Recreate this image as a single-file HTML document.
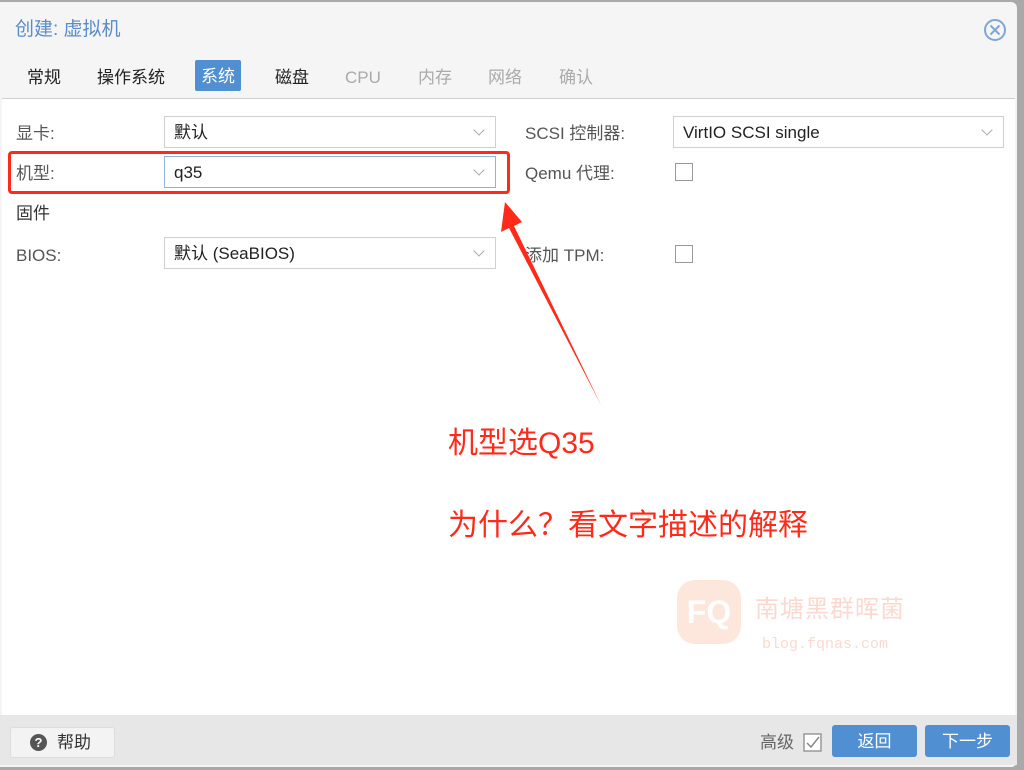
<!DOCTYPE html>
<html><head><meta charset="utf-8"><style>
*{box-sizing:border-box;margin:0;padding:0}
body{width:1024px;height:770px;background:#a9a9a9;position:relative;overflow:hidden;font-family:"Liberation Sans","Noto Sans CJK SC",sans-serif;line-height:1}
.dlg{position:absolute;left:0;top:2px;width:1017px;height:765px;background:#f5f5f5;border-radius:0 6px 6px 0;overflow:hidden}
.a{position:absolute;white-space:nowrap;line-height:1}
.title{left:15px;top:18px;font-size:19px;color:#5a8dc8}
.tab{top:67px;font-size:17px;color:#222}
.tab.dis{color:#aaa}
.body{position:absolute;left:2px;top:98px;width:1013px;height:617px;background:#fff;border-top:1px solid #cfcfcf}
.lbl{font-size:17px;color:#555}
.sel{position:absolute;height:32px;border:1px solid #cfcfcf;background:#fff;font-size:17px;line-height:17px;color:#222;padding:7px 0 0 9px;white-space:nowrap}
.sel:after{content:"";position:absolute;right:12px;top:9px;width:7px;height:7px;border-right:1.3px solid #aaa;border-bottom:1.3px solid #aaa;transform:rotate(45deg)}
.cb{position:absolute;width:18px;height:18px;border:1.5px solid #999;background:#fff}
.foot{position:absolute;left:0;top:715px;width:1017px;height:50px;background:#e7e7e7}
.btn{position:absolute;top:725px;height:32px;border-radius:3px;background:#4f8fd2;color:#fff;font-size:17px;line-height:17px;text-align:center;padding-top:8px}
.red{color:#ff2a1a;font-size:30px}
</style></head><body>
<div class="dlg">
<div class="a title">创建: 虚拟机</div>
<svg class="a" style="left:983px;top:16px" width="24" height="24"><circle cx="12" cy="12" r="10" fill="none" stroke="#7fa6d8" stroke-width="2"/><path d="M7.5 7.5L16.5 16.5M16.5 7.5L7.5 16.5" stroke="#7fa6d8" stroke-width="2"/></svg>
<div class="a tab" style="left:27px">常规</div>
<div class="a tab" style="left:97px">操作系统</div>
<div class="a" style="left:195px;top:58px;width:46px;height:31px;background:#4f8fd2;border-radius:2px;color:#fff;font-size:17px;text-align:center;padding-top:8px">系统</div>
<div class="a tab" style="left:275px">磁盘</div>
<div class="a tab dis" style="left:345px">CPU</div>
<div class="a tab dis" style="left:418px">内存</div>
<div class="a tab dis" style="left:488px">网络</div>
<div class="a tab dis" style="left:559px">确认</div>
</div>
<div class="body"></div>
<div class="a lbl" style="left:16px;top:125px">显卡:</div>
<div class="sel" style="left:164px;top:116px;width:332px">默认</div>
<div class="a lbl" style="left:16px;top:165px">机型:</div>
<div class="sel" style="left:164px;top:156px;width:332px;border-color:#8fb3de">q35</div>
<div class="a" style="left:8px;top:151px;width:502px;height:43px;border:3px solid #ff2a1a;border-radius:4px"></div>
<div class="a lbl" style="left:16px;top:205px;color:#333">固件</div>
<div class="a lbl" style="left:16px;top:247px">BIOS:</div>
<div class="sel" style="left:164px;top:237px;width:332px">默认 (SeaBIOS)</div>
<div class="a lbl" style="left:525px;top:125px">SCSI 控制器:</div>
<div class="sel" style="left:673px;top:116px;width:331px">VirtIO SCSI single</div>
<div class="a lbl" style="left:525px;top:165px">Qemu 代理:</div>
<div class="cb" style="left:675px;top:163px"></div>
<div class="a lbl" style="left:525px;top:247px">添加 TPM:</div>
<div class="cb" style="left:675px;top:245px"></div>
<svg class="a" style="left:0;top:0" width="1024" height="770"><polygon points="505,202 522,222 514,226 601,405 509,228 501,232" fill="#ff2a1a"/></svg>
<div class="a red" style="left:448px;top:429px">机型选Q35</div>
<div class="a red" style="left:448px;top:511px">为什么？看文字描述的解释</div>
<div class="a" style="left:677px;top:580px;width:64px;height:64px;border-radius:18px;background:#fde6dc;color:#fff;font-size:32px;font-weight:bold;text-align:center;padding-top:16px">FQ</div>
<div class="a" style="left:755px;top:598px;font-size:24px;color:#fcd9d0;letter-spacing:1px">南塘黑群晖菌</div>
<div class="a" style="left:762px;top:637px;font-family:'Liberation Mono',monospace;font-size:15px;color:#fcd9d0">blog.fqnas.com</div>
<div class="foot"></div>
<div class="a" style="left:10px;top:727px;width:105px;height:31px;background:#f3f3f3;border:1px solid #ddd;border-radius:3px"></div>
<div class="a" style="left:30px;top:734px;width:17px;height:17px;border-radius:50%;background:#555;color:#fff;font-size:13px;font-weight:bold;text-align:center;line-height:17px">?</div>
<div class="a" style="left:57px;top:734px;font-size:17px;color:#333">帮助</div>
<div class="a" style="left:760px;top:734px;font-size:17px;color:#666">高级</div>
<svg class="a" style="left:803px;top:733px" width="19" height="19"><rect x="1" y="1" width="17" height="17" fill="#fff" stroke="#999" stroke-width="1.5"/><path d="M4 10L8 14L16 4" fill="none" stroke="#888" stroke-width="1.5"/></svg>
<div class="btn" style="left:832px;width:85px">返回</div>
<div class="btn" style="left:925px;width:85px">下一步</div>
</body></html>
